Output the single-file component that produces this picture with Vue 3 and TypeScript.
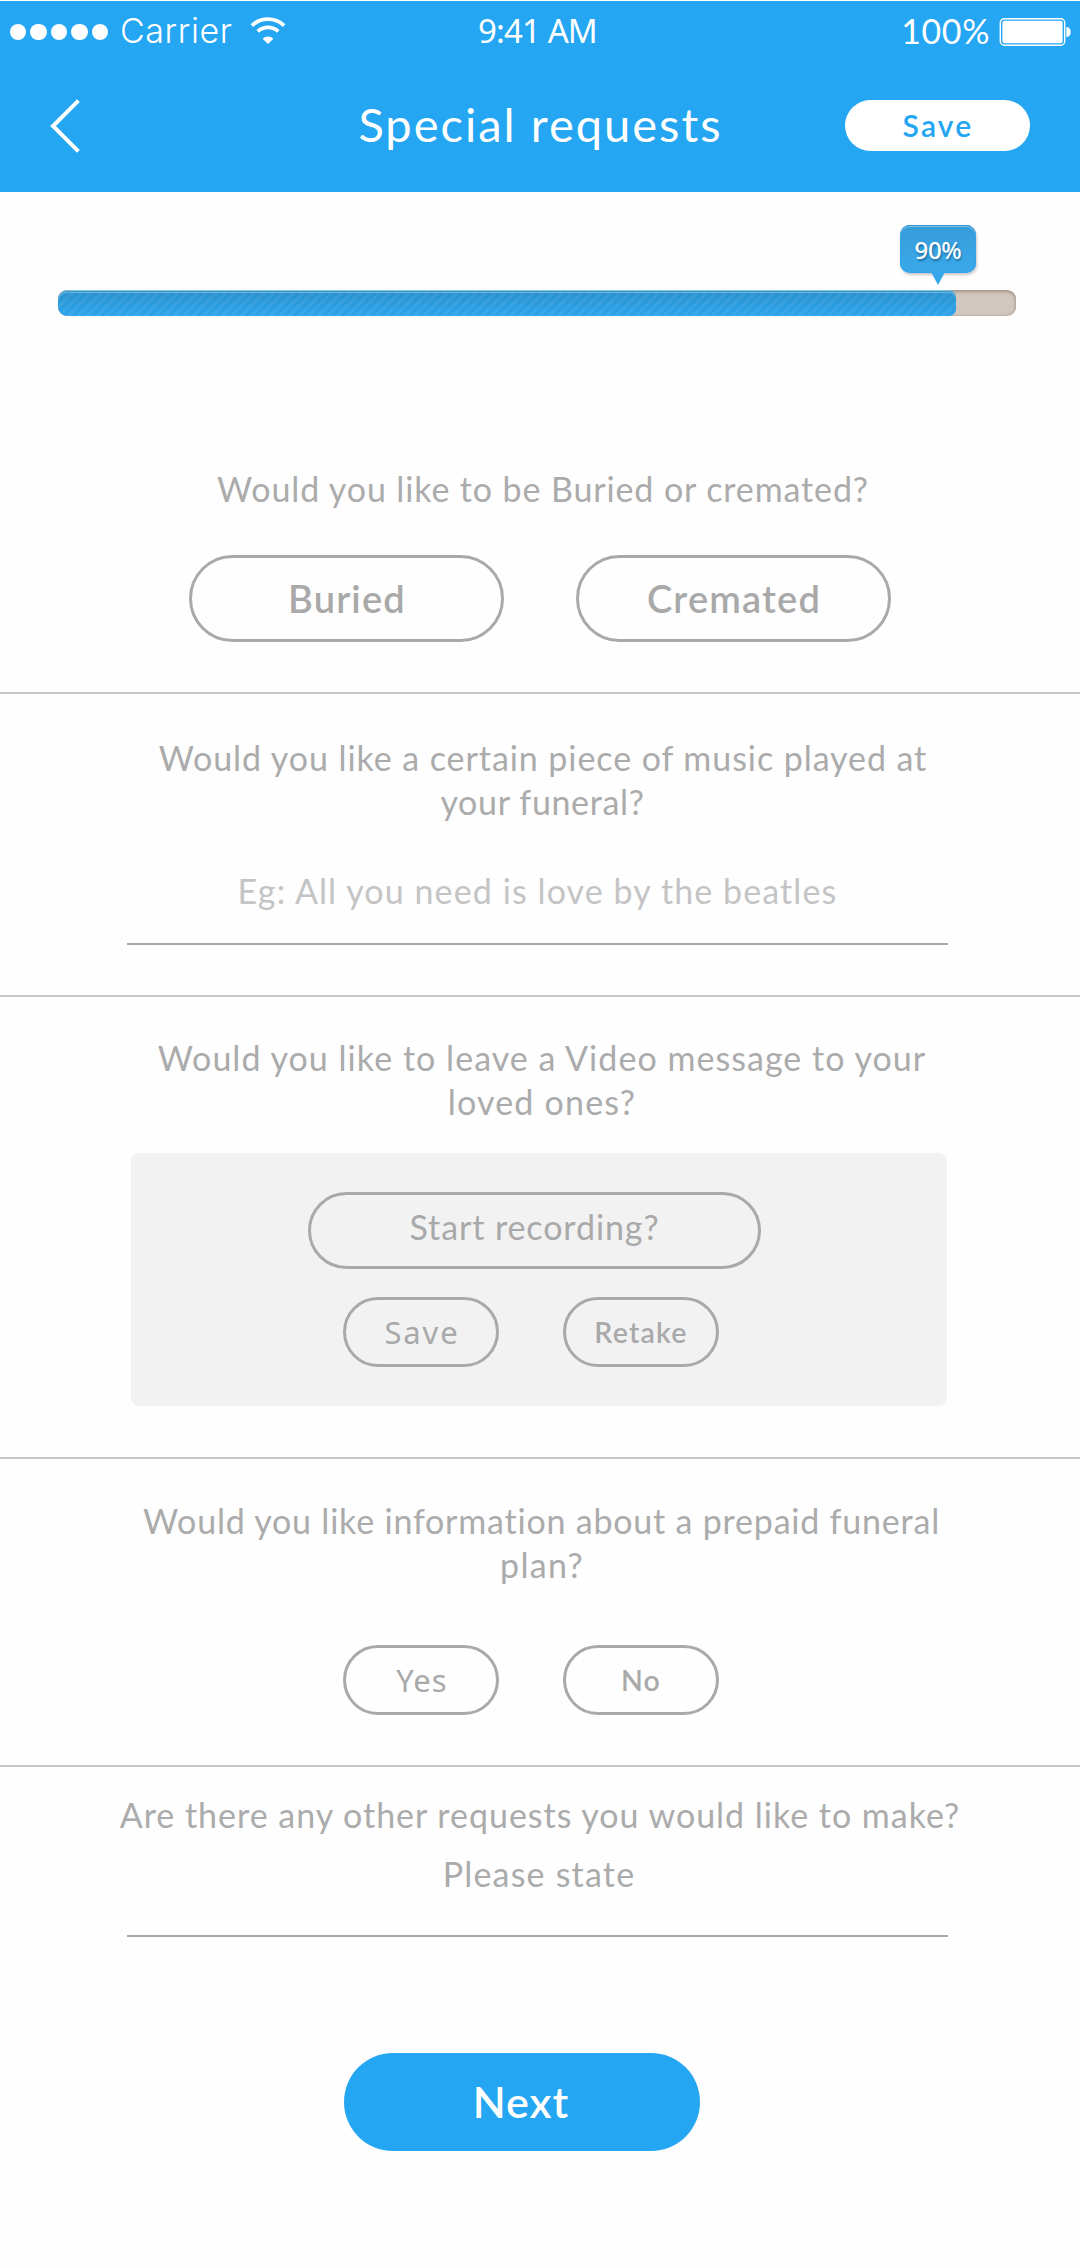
<script setup lang="ts">
import { ref } from 'vue'

const progress = ref<number>(90)
const signalDots: number = 5
</script>

<template>
  <main class="screen">
    <header class="header">
      <div class="status">
        <div class="status-left">
          <span v-for="n in signalDots" :key="n" class="dot"></span>
          <span class="carrier">Carrier</span>
          <svg class="wifi" width="36" height="28" viewBox="0 0 36 28">
            <path d="M1.9 8.6 A23.5 23.5 0 0 1 34.1 8.6" fill="none" stroke="#fff" stroke-width="3.8" />
            <path d="M7.7 14.4 A15.2 15.2 0 0 1 28.3 14.4" fill="none" stroke="#fff" stroke-width="3.8" />
            <path d="M18 27 L12.6 21.7 A8 8 0 0 1 23.4 21.7 Z" fill="#fff" />
          </svg>
        </div>
        <span class="time">9:41 AM</span>
        <div class="status-right">
          <span class="percent">100%</span>
          <svg class="battery" width="73" height="30" viewBox="0 0 73 30">
            <rect x="1.3" y="1.7" width="64.4" height="26.6" rx="4" fill="none" stroke="#fff" stroke-width="1.4" />
            <rect x="3.4" y="3.8" width="60.2" height="22.4" rx="2" fill="#fff" />
            <path d="M67.4 10 C70 10 71.8 12 71.8 15 C71.8 18 70 20 67.4 20 Z" fill="#fff" />
          </svg>
        </div>
      </div>
      <nav class="nav">
        <svg class="back" width="32" height="54" viewBox="0 0 32 54">
          <path d="M28.4 1.6 L3 27 L28.4 52.4" fill="none" stroke="#fff" stroke-width="4" />
        </svg>
        <h1 class="title">Special requests</h1>
        <button class="save-top">Save</button>
      </nav>
    </header>

    <section class="progress">
      <div class="track">
        <div class="fill" :style="{ width: `calc(${progress}% + 36px)` }"></div>
        <div class="bubble">
          <span>{{ progress }}%</span>
          <svg class="tip" width="14" height="13" viewBox="0 0 14 13">
            <path d="M0 0 H14 L7 13 Z" fill="#36a7ea" />
          </svg>
        </div>
      </div>
    </section>

    <section class="block burial">
      <p class="question q-burial">Would you like to be Buried or cremated?</p>
      <div class="choices wide">
        <button class="pill large">Buried</button>
        <button class="pill large">Cremated</button>
      </div>
    </section>

    <section class="block music">
      <p class="question q-music">Would you like a certain piece of music played at</p>
      <p class="question q-music-end">your funeral?</p>
      <div class="field example">Eg: All you need is love by the beatles</div>
    </section>

    <section class="block video">
      <p class="question q-video">Would you like to leave a Video message to your</p>
      <p class="question q-video-end">loved ones?</p>
      <div class="panel">
        <button class="pill record">Start recording?</button>
        <div class="choices">
          <button class="pill small light spaced">Save</button>
          <button class="pill small">Retake</button>
        </div>
      </div>
    </section>

    <section class="block plan">
      <p class="question q-plan">Would you like information about a prepaid funeral</p>
      <p class="question q-plan-end">plan?</p>
      <div class="choices answers">
        <button class="pill small light">Yes</button>
        <button class="pill small">No</button>
      </div>
    </section>

    <section class="other">
      <p class="question q-other">Are there any other requests you would like to make?</p>
      <div class="field state">Please state</div>
      <button class="next">Next</button>
    </section>
  </main>
</template>

<style>
body {
  margin: 0;
  background: #fefefe;
}
</style>

<style scoped>
.screen {
  width: 1080px;
  height: 2268px;
  overflow: hidden;
  background: #fefefe;
  color: #ababac;
  font-family: Lato, 'Noto Sans', sans-serif;
}
.screen * {
  box-sizing: border-box;
}
p,
h1 {
  margin: 0;
  font-weight: 400;
}
button {
  display: flex;
  align-items: center;
  justify-content: center;
  padding: 0 0 2px;
  border: 0;
  background: none;
  color: inherit;
  font-family: inherit;
  white-space: nowrap;
}
.header {
  height: 192px;
  border-top: 1px solid #fefefe;
  background: #24a6f2;
  color: #fff;
}
.status {
  display: grid;
  grid-template-columns: 1fr auto 1fr;
  align-items: center;
  height: 58px;
  padding: 0 8px 0 10px;
}
.status-left {
  display: flex;
  align-items: center;
}
.dot {
  width: 16.4px;
  height: 16.4px;
  margin: 4px 4px 0 0;
  border-radius: 50%;
  background: #fff;
}
.carrier {
  margin-left: 8px;
  padding-top: 2px;
  width: 120px;
  font-family: Inter, sans-serif;
  font-size: 34px;
  font-weight: 300;
  letter-spacing: 0.6px;
  line-height: 56px;
}
.wifi {
  margin: 2px 0 0 10px;
}
.time {
  padding: 2px 7px 0 0;
  font-family: 'Noto Sans', sans-serif;
  font-size: 33px;
  letter-spacing: -0.9px;
  line-height: 56px;
}
.status-right {
  display: flex;
  align-items: center;
  justify-content: flex-end;
}
.percent {
  padding-top: 2px;
  font-size: 34px;
  letter-spacing: 0.6px;
  line-height: 56px;
}
.battery {
  margin: 4px 0 0 9px;
}
.nav {
  display: grid;
  grid-template-columns: 1fr auto 1fr;
  align-items: center;
  height: 133px;
  padding: 0 50px;
}
.title {
  padding: 0 0 3px 1px;
  font-size: 47px;
  letter-spacing: 2px;
  line-height: 60px;
}
.save-top {
  justify-self: end;
  width: 185px;
  height: 51px;
  padding: 0 0 2px 1px;
  border-radius: 26px;
  background: #fff;
  color: #24a6f2;
  font-size: 30px;
  font-weight: 600;
  letter-spacing: 2.2px;
}
.progress {
  height: 258px;
  padding: 98px 64px 0 58px;
}
.track {
  position: relative;
  height: 26px;
  border-radius: 9px;
  background: #d1c7be;
  box-shadow: inset 0 2px 3px rgba(110, 95, 85, 0.45), inset -1px -1px 2px rgba(110, 95, 85, 0.2);
}
.fill {
  height: 26px;
  border-radius: 9px 7px 7px 9px;
  background:
    repeating-linear-gradient(135deg, transparent 0 3.4px, rgba(255, 255, 255, 0.06) 3.4px 6.8px),
    linear-gradient(#2890ca, #2ca4ec);
  box-shadow:
    inset 0 1px #8fc3dc,
    inset 0 2px #3398d0,
    inset 0 3px #6ab4dd;
}
.bubble {
  position: absolute;
  left: 842px;
  top: -65px;
  width: 76px;
  height: 48px;
  border-radius: 10px;
  background: linear-gradient(#369cd8, #3aa9ea);
  box-shadow:
    1px 2px 3px rgba(0, 0, 0, 0.22),
    inset 0 1px #2a93d4,
    inset 0 2px #7cc2ea,
    inset 0 0 0 1px #30a3ea;
  color: #fff;
  font-family: 'Noto Sans', sans-serif;
  font-size: 24px;
  font-weight: 500;
  letter-spacing: -0.3px;
  line-height: 49px;
  text-align: center;
  text-shadow: 1px 2px 2px rgba(0, 50, 90, 0.45);
}
.tip {
  position: absolute;
  left: 31px;
  top: 47px;
}
.block {
  border-bottom: 2px solid #c8c8c8;
}
.question {
  font-size: 34px;
  line-height: 44px;
  text-align: center;
  white-space: nowrap;
}
.burial {
  height: 244px;
  padding-top: 17px;
}
.music {
  height: 303px;
  padding-top: 42px;
}
.video {
  height: 462px;
  padding-top: 39px;
}
.plan {
  height: 308px;
  padding-top: 40px;
}
.other {
  padding-top: 26px;
}
.q-burial {
  padding-left: 6px;
  letter-spacing: 0.88px;
}
.q-music {
  padding-left: 6px;
  letter-spacing: 0.93px;
}
.q-music-end {
  padding-left: 5px;
  letter-spacing: 0.65px;
}
.q-video {
  padding-left: 4px;
  letter-spacing: 1.04px;
}
.q-video-end {
  padding-left: 4px;
  letter-spacing: 1.2px;
}
.q-plan {
  padding-left: 3px;
  letter-spacing: 0.79px;
}
.q-plan-end {
  padding-left: 4px;
  letter-spacing: 1.3px;
}
.q-other {
  letter-spacing: 0.98px;
}
.choices {
  display: flex;
  justify-content: center;
  gap: 64px;
}
.choices.wide {
  gap: 72px;
  margin-top: 44px;
  padding-right: 1px;
}
.choices.answers {
  margin-top: 58px;
  padding-right: 18px;
}
.pill {
  border: 3px solid #a9a9aa;
  color: #a9a9aa;
}
.large {
  width: 315px;
  height: 87px;
  padding-left: 2px;
  border-radius: 44px;
  font-size: 38px;
  font-weight: 600;
  letter-spacing: 1.2px;
}
.small {
  width: 156px;
  height: 70px;
  padding-bottom: 1px;
  border-radius: 35px;
  font-size: 28.5px;
  font-weight: 600;
  letter-spacing: 1.2px;
}
.light {
  font-family: 'Noto Sans', sans-serif;
  font-size: 31px;
  font-weight: 400;
  letter-spacing: 1px;
  padding-left: 2px;
}
.spaced {
  letter-spacing: 1.9px;
}
.field {
  width: 821px;
  margin-left: 127px;
  border-bottom: 2px solid #a9a9aa;
  font-size: 34px;
  line-height: 44px;
  text-align: center;
}
.example {
  height: 76px;
  margin-top: 45px;
  color: #c4c4c5;
  letter-spacing: 1.1px;
}
.state {
  height: 85px;
  margin-top: 15px;
  padding-left: 3px;
  letter-spacing: 1.2px;
}
.panel {
  display: flex;
  flex-direction: column;
  align-items: center;
  gap: 28px;
  width: 816px;
  height: 253px;
  margin: 29px 0 0 131px;
  padding: 39px 16px 0 0;
  border-radius: 8px;
  background: #f2f2f2;
}
.record {
  width: 453px;
  height: 77px;
  margin-left: 7px;
  padding-bottom: 8px;
  border-radius: 39px;
  font-size: 34px;
  letter-spacing: 0.9px;
}
.next {
  width: 356px;
  height: 98px;
  margin: 116px 0 0 344px;
  padding: 0 2px 2px 0;
  border-radius: 49px;
  background: #24a6f2;
  color: #fff;
  font-size: 43px;
  font-weight: 600;
  letter-spacing: 1px;
}
</style>
